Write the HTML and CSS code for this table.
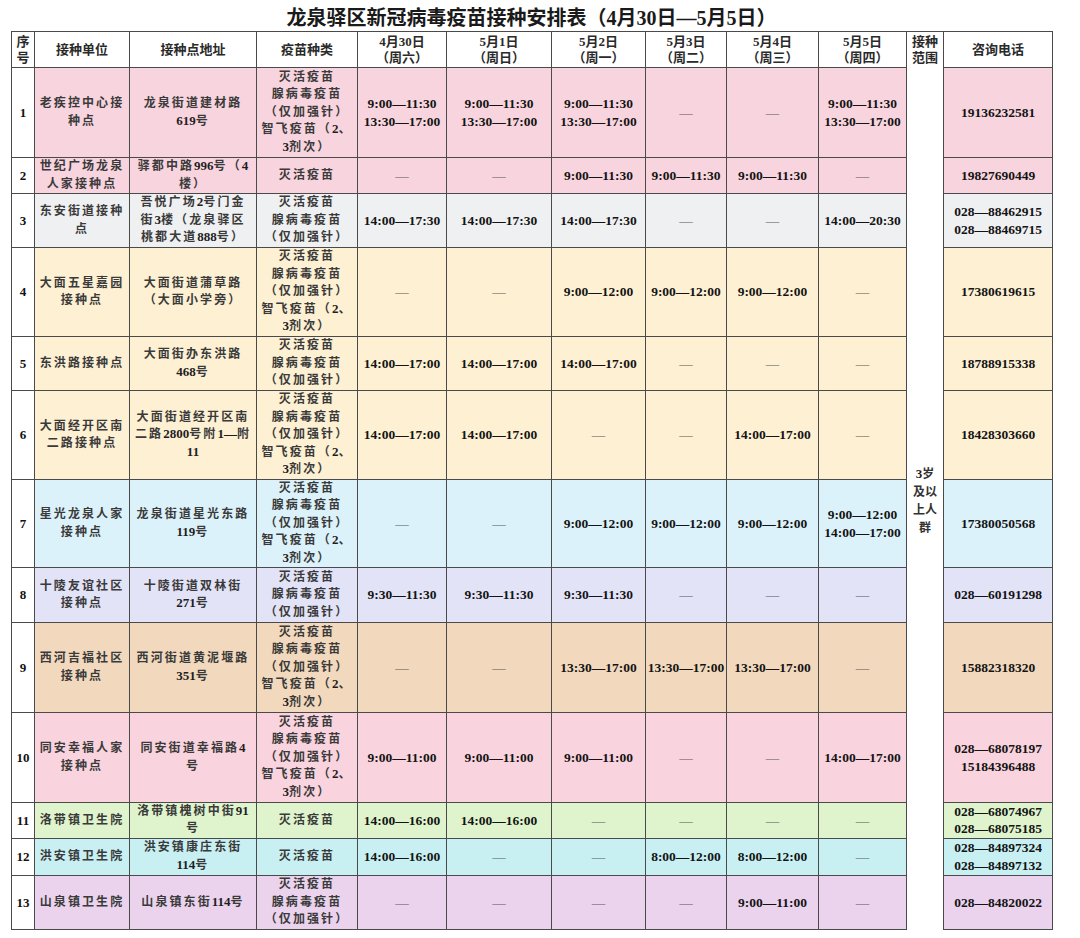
FILE: index.html
```html
<!DOCTYPE html>
<html lang="zh-CN">
<head>
<meta charset="utf-8">
<title>龙泉驿区新冠病毒疫苗接种安排表</title>
<link rel="stylesheet" href="styles.css">
</head>
<body>
<div class="page">
  <h1 class="title">龙泉驿区新冠病毒疫苗接种安排表（4月30日—5月5日）</h1>
  <table class="sched">
    <colgroup>
      <col class="c-no"><col class="c-unit"><col class="c-addr"><col class="c-vac">
      <col class="c-d1"><col class="c-d2"><col class="c-d3"><col class="c-d4"><col class="c-d5"><col class="c-d6">
      <col class="c-scope"><col class="c-tel">
    </colgroup>
    <thead>
      <tr class="h-head">
        <th>序<br>号</th>
        <th>接种单位</th>
        <th>接种点地址</th>
        <th>疫苗种类</th>
        <th>4月30日<br>（周六）</th>
        <th>5月1日<br>（周日）</th>
        <th>5月2日<br>（周一）</th>
        <th>5月3日<br>（周二）</th>
        <th>5月4日<br>（周三）</th>
        <th>5月5日<br>（周四）</th>
        <th class="scope-h">接种<br>范围</th>
        <th>咨询电话</th>
      </tr>
    </thead>
    <tbody>
      <tr class="r-pink h90">
        <td class="no">1</td>
        <td class="cn">老疾控中心接<br>种点</td>
        <td class="cn">龙泉街道建材路<br><span class="n">619</span>号</td>
        <td class="cn">灭活疫苗<br>腺病毒疫苗<br>（仅加强针）<br>智飞疫苗（<span class="n">2</span>、<br><span class="n">3</span>剂次）</td>
        <td class="t">9:00—11:30<br>13:30—17:00</td>
        <td class="t">9:00—11:30<br>13:30—17:00</td>
        <td class="t">9:00—11:30<br>13:30—17:00</td>
        <td class="t dash">—</td>
        <td class="t dash">—</td>
        <td class="t">9:00—11:30<br>13:30—17:00</td>
        <td class="scope" rowspan="13"><span class="n">3</span>岁<br>及以<br>上人<br>群</td>
        <td class="t">19136232581</td>
      </tr>
      <tr class="r-pink h36">
        <td class="no">2</td>
        <td class="cn">世纪广场龙泉<br>人家接种点</td>
        <td class="cn">驿都中路<span class="n">996</span>号（<span class="n">4</span><br>楼）</td>
        <td class="cn">灭活疫苗</td>
        <td class="t dash">—</td>
        <td class="t dash">—</td>
        <td class="t">9:00—11:30</td>
        <td class="t">9:00—11:30</td>
        <td class="t">9:00—11:30</td>
        <td class="t dash">—</td>
        <td class="t">19827690449</td>
      </tr>
      <tr class="r-gray h54">
        <td class="no">3</td>
        <td class="cn">东安街道接种<br>点</td>
        <td class="cn">吾悦广场<span class="n">2</span>号门金<br>街<span class="n">3</span>楼（龙泉驿区<br>桃都大道<span class="n">888</span>号）</td>
        <td class="cn">灭活疫苗<br>腺病毒疫苗<br>（仅加强针）</td>
        <td class="t">14:00—17:30</td>
        <td class="t">14:00—17:30</td>
        <td class="t">14:00—17:30</td>
        <td class="t dash">—</td>
        <td class="t dash">—</td>
        <td class="t">14:00—20:30</td>
        <td class="t">028—88462915<br>028—88469715</td>
      </tr>
      <tr class="r-yellow h89">
        <td class="no">4</td>
        <td class="cn">大面五星嘉园<br>接种点</td>
        <td class="cn">大面街道蒲草路<br>（大面小学旁）</td>
        <td class="cn">灭活疫苗<br>腺病毒疫苗<br>（仅加强针）<br>智飞疫苗（<span class="n">2</span>、<br><span class="n">3</span>剂次）</td>
        <td class="t dash">—</td>
        <td class="t dash">—</td>
        <td class="t">9:00—12:00</td>
        <td class="t">9:00—12:00</td>
        <td class="t">9:00—12:00</td>
        <td class="t dash">—</td>
        <td class="t">17380619615</td>
      </tr>
      <tr class="r-yellow h54">
        <td class="no">5</td>
        <td class="cn">东洪路接种点</td>
        <td class="cn">大面街办东洪路<br><span class="n">468</span>号</td>
        <td class="cn">灭活疫苗<br>腺病毒疫苗<br>（仅加强针）</td>
        <td class="t">14:00—17:00</td>
        <td class="t">14:00—17:00</td>
        <td class="t">14:00—17:00</td>
        <td class="t dash">—</td>
        <td class="t dash">—</td>
        <td class="t dash">—</td>
        <td class="t">18788915338</td>
      </tr>
      <tr class="r-yellow h89">
        <td class="no">6</td>
        <td class="cn">大面经开区南<br>二路接种点</td>
        <td class="cn">大面街道经开区南<br>二路<span class="n">2800</span>号附<span class="n">1—</span>附<br><span class="n">11</span></td>
        <td class="cn">灭活疫苗<br>腺病毒疫苗<br>（仅加强针）<br>智飞疫苗（<span class="n">2</span>、<br><span class="n">3</span>剂次）</td>
        <td class="t">14:00—17:00</td>
        <td class="t">14:00—17:00</td>
        <td class="t dash">—</td>
        <td class="t dash">—</td>
        <td class="t">14:00—17:00</td>
        <td class="t dash">—</td>
        <td class="t">18428303660</td>
      </tr>
      <tr class="r-blue h88">
        <td class="no">7</td>
        <td class="cn">星光龙泉人家<br>接种点</td>
        <td class="cn">龙泉街道星光东路<br><span class="n">119</span>号</td>
        <td class="cn">灭活疫苗<br>腺病毒疫苗<br>（仅加强针）<br>智飞疫苗（<span class="n">2</span>、<br><span class="n">3</span>剂次）</td>
        <td class="t dash">—</td>
        <td class="t dash">—</td>
        <td class="t">9:00—12:00</td>
        <td class="t">9:00—12:00</td>
        <td class="t">9:00—12:00</td>
        <td class="t">9:00—12:00<br>14:00—17:00</td>
        <td class="t">17380050568</td>
      </tr>
      <tr class="r-lav h55">
        <td class="no">8</td>
        <td class="cn">十陵友谊社区<br>接种点</td>
        <td class="cn">十陵街道双林街<br><span class="n">271</span>号</td>
        <td class="cn">灭活疫苗<br>腺病毒疫苗<br>（仅加强针）</td>
        <td class="t">9:30—11:30</td>
        <td class="t">9:30—11:30</td>
        <td class="t">9:30—11:30</td>
        <td class="t dash">—</td>
        <td class="t dash">—</td>
        <td class="t dash">—</td>
        <td class="t">028—60191298</td>
      </tr>
      <tr class="r-tan h90">
        <td class="no">9</td>
        <td class="cn">西河吉福社区<br>接种点</td>
        <td class="cn">西河街道黄泥堰路<br><span class="n">351</span>号</td>
        <td class="cn">灭活疫苗<br>腺病毒疫苗<br>（仅加强针）<br>智飞疫苗（<span class="n">2</span>、<br><span class="n">3</span>剂次）</td>
        <td class="t dash">—</td>
        <td class="t dash">—</td>
        <td class="t">13:30—17:00</td>
        <td class="t">13:30—17:00</td>
        <td class="t">13:30—17:00</td>
        <td class="t dash">—</td>
        <td class="t">15882318320</td>
      </tr>
      <tr class="r-pink2 h90">
        <td class="no">10</td>
        <td class="cn">同安幸福人家<br>接种点</td>
        <td class="cn">同安街道幸福路<span class="n">4</span><br>号</td>
        <td class="cn">灭活疫苗<br>腺病毒疫苗<br>（仅加强针）<br>智飞疫苗（<span class="n">2</span>、<br><span class="n">3</span>剂次）</td>
        <td class="t">9:00—11:00</td>
        <td class="t">9:00—11:00</td>
        <td class="t">9:00—11:00</td>
        <td class="t dash">—</td>
        <td class="t dash">—</td>
        <td class="t">14:00—17:00</td>
        <td class="t">028—68078197<br>15184396488</td>
      </tr>
      <tr class="r-green h34">
        <td class="no">11</td>
        <td class="cn">洛带镇卫生院</td>
        <td class="cn">洛带镇槐树中街<span class="n">91</span><br>号</td>
        <td class="cn">灭活疫苗</td>
        <td class="t">14:00—16:00</td>
        <td class="t">14:00—16:00</td>
        <td class="t dash">—</td>
        <td class="t dash">—</td>
        <td class="t dash">—</td>
        <td class="t dash">—</td>
        <td class="t">028—68074967<br>028—68075185</td>
      </tr>
      <tr class="r-cyan h37">
        <td class="no">12</td>
        <td class="cn">洪安镇卫生院</td>
        <td class="cn">洪安镇康庄东街<br><span class="n">114</span>号</td>
        <td class="cn">灭活疫苗</td>
        <td class="t">14:00—16:00</td>
        <td class="t dash">—</td>
        <td class="t dash">—</td>
        <td class="t">8:00—12:00</td>
        <td class="t">8:00—12:00</td>
        <td class="t dash">—</td>
        <td class="t">028—84897324<br>028—84897132</td>
      </tr>
      <tr class="r-lilac h54">
        <td class="no">13</td>
        <td class="cn">山泉镇卫生院</td>
        <td class="cn">山泉镇东街<span class="n">114</span>号</td>
        <td class="cn">灭活疫苗<br>腺病毒疫苗<br>（仅加强针）</td>
        <td class="t dash">—</td>
        <td class="t dash">—</td>
        <td class="t dash">—</td>
        <td class="t dash">—</td>
        <td class="t">9:00—11:00</td>
        <td class="t dash">—</td>
        <td class="t">028—84820022</td>
      </tr>
    </tbody>
  </table>
</div>
</body>
</html>
```

FILE: styles.css
```css
html, body {
  margin: 0;
  padding: 0;
  background: #ffffff;
}

.page {
  width: 1080px;
  height: 938px;
  overflow: hidden;
  font-family: "Liberation Serif", "Noto Sans CJK SC", serif;
  color: #1e1e1e;
}

.title {
  margin: 0;
  height: 31px;
  padding-left: 11px;
  width: 1041px;
  box-sizing: content-box;
  text-align: center;
  font-size: 20px;
  line-height: 36px;
  font-weight: 700;
  color: #1a1a1a;
  white-space: nowrap;
}

.sched {
  margin-left: 11px;
  width: 1041px;
  table-layout: fixed;
  border-collapse: collapse;
}

.c-no { width: 23px; }
.c-unit { width: 95px; }
.c-addr { width: 127px; }
.c-vac { width: 101px; }
.c-d1 { width: 89px; }
.c-d2 { width: 105px; }
.c-d3 { width: 94px; }
.c-d4 { width: 81px; }
.c-d5 { width: 92px; }
.c-d6 { width: 88px; }
.c-scope { width: 37px; }
.c-tel { width: 109px; }

.sched th,
.sched td {
  border: 1px solid #4a4a4a;
  padding: 0;
  text-align: center;
  vertical-align: middle;
  white-space: nowrap;
  overflow: hidden;
}

.sched th {
  background: #ffffff;
  font-size: 13px;
  line-height: 16px;
  font-weight: 700;
  color: #2a2a2a;
  height: 35px;
}

.sched td {
  line-height: 17.4px;
}

.sched .scope-h {
  border-bottom: none;
}

.sched td.scope {
  background: #ffffff;
  border-top: none;
  border-bottom: none;
  font-size: 12px;
  line-height: 18px;
  font-weight: 700;
  color: #333333;
  padding-top: 6px;
}

.sched td.no {
  background: #ffffff;
  font-size: 13px;
  font-weight: 700;
  color: #111111;
}

.sched td.cn {
  font-size: 12px;
  letter-spacing: 2.1px;
  font-weight: 700;
  color: #3a3a3a;
}

.n {
  letter-spacing: 0;
  font-size: 13px;
  line-height: 0;
  color: #1e1e1e;
}

.sched td.t {
  font-size: 13.5px;
  font-weight: 700;
  color: #141414;
}

.sched td.dash {
  font-weight: 400;
  color: #5a5a5a;
}

.h90 td { height: 89px; }
.h89 td { height: 88px; }
.h88 td { height: 87px; }
.h55 td { height: 54px; }
.h54 td { height: 53px; }
.h37 td { height: 36px; }
.h36 td { height: 35px; }
.h34 td { height: 33px; }

.r-pink td { background: #f8d4de; }
.r-pink2 td { background: #f9d3de; }
.r-gray td { background: #eff0f2; }
.r-yellow td { background: #fdf0d3; }
.r-blue td { background: #dcf2fb; }
.r-lav td { background: #e3e3f8; }
.r-tan td { background: #f2d9bd; }
.r-green td { background: #dff4cc; }
.r-cyan td { background: #c8f0f3; }
.r-lilac td { background: #ebd3ee; }

.sched tr td.no { background: #ffffff; }
.sched tr td.scope { background: #ffffff; }
```
